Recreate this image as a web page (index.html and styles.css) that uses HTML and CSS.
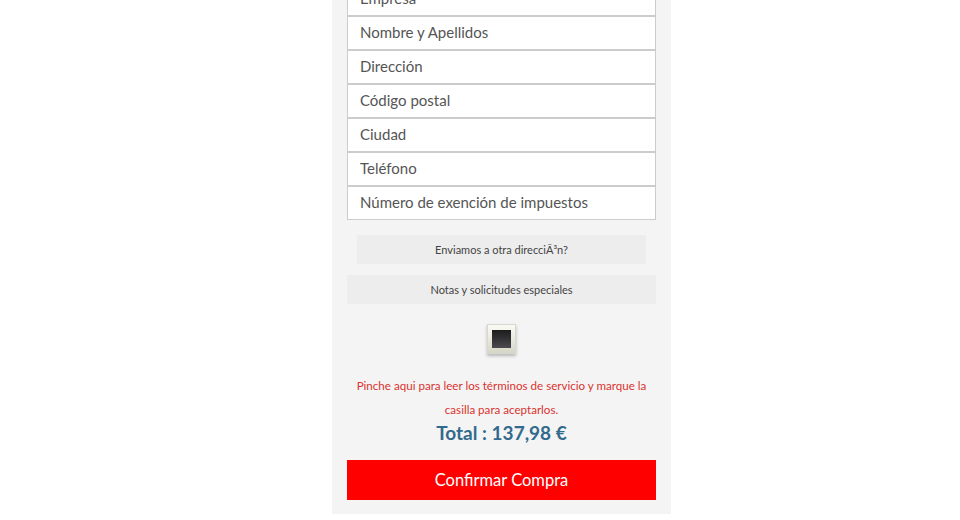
FILE: index.html
```html
<!DOCTYPE html>
<html lang="es">
<head>
<meta charset="utf-8">
<title>Checkout</title>
<link rel="stylesheet" href="styles.css">
</head>
<body>
<div class="column">
  <div class="fields">
    <div class="field">Empresa</div>
    <div class="field">Nombre y Apellidos</div>
    <div class="field">Dirección</div>
    <div class="field">Código postal</div>
    <div class="field">Ciudad</div>
    <div class="field">Teléfono</div>
    <div class="field">Número de exención de impuestos</div>
  </div>
  <div class="toggle toggle-inset">Enviamos a otra direcciÃ³n?</div>
  <div class="toggle">Notas y solicitudes especiales</div>
  <div class="check-row"><div class="check"><div class="check-inner"></div></div></div>
  <p class="terms">Pinche aqui para leer los términos de servicio y marque la casilla para aceptarlos.</p>
  <div class="total">Total : 137,98 €</div>
  <div class="confirm">Confirmar Compra</div>
</div>
</body>
</html>
```
FILE: styles.css
```css
html, body {
  margin: 0;
  padding: 0;
  background: #ffffff;
  font-family: "Lato", "Open Sans", sans-serif;
}
.column {
  width: 339px;
  box-sizing: border-box;
  margin: -18px 0 0 332px;
  padding: 0 15px 14px;
  background: #f4f4f4;
}
.fields {
  display: flex;
  flex-direction: column;
}
.field {
  height: 34px;
  box-sizing: border-box;
  border: 1px solid #cccccc;
  background: #ffffff;
  padding: 0 12px 2px;
  display: flex;
  align-items: center;
  font-size: 15px;
  color: #555555;
}
.toggle {
  height: 29px;
  margin-top: 11px;
  background: #ededed;
  display: flex;
  align-items: center;
  justify-content: center;
  padding-bottom: 1px;
  box-sizing: border-box;
  font-size: 11px;
  color: #444444;
}
.toggle-inset {
  margin: 15px 10px 0;
}
.check-row {
  display: flex;
  justify-content: center;
  margin-top: 20px;
}
.check {
  width: 29px;
  height: 30px;
  box-sizing: border-box;
  border: 1px solid #d8d8d0;
  background: linear-gradient(#fbfbf5, #d6d6c6);
  box-shadow: 0 2px 3px rgba(0, 0, 0, 0.25);
  display: flex;
  align-items: center;
  justify-content: center;
}
.check-inner {
  width: 19px;
  height: 18px;
  background: linear-gradient(#1c1c1c, #4a4a50);
}
.terms {
  margin: 20px 0 0;
  padding: 0 7px;
  text-align: center;
  font-size: 11.6px;
  line-height: 24px;
  color: #d9332f;
}
.total {
  text-align: center;
  font-size: 19px;
  line-height: 22px;
  font-weight: 700;
  color: #316a8c;
}
.confirm {
  margin-top: 16px;
  height: 40px;
  background: #ff0000;
  color: #ffffff;
  display: flex;
  align-items: center;
  justify-content: center;
  font-size: 16.5px;
}
```
